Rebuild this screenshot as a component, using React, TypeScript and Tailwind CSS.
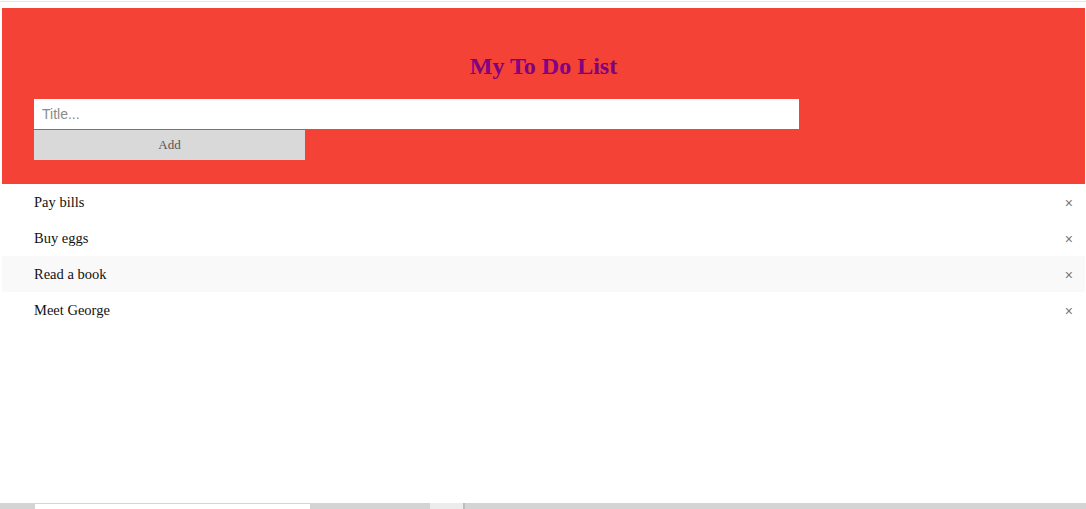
import { useState } from "react";

const initialItems = ["Pay bills", "Buy eggs", "Read a book", "Meet George"];

export default function App() {
  const [items, setItems] = useState(initialItems);
  const [title, setTitle] = useState("");

  const addItem = () => {
    if (!title.trim()) return;
    setItems([...items, title.trim()]);
    setTitle("");
  };

  return (
    <div className="h-[509px] flex flex-col bg-white overflow-hidden font-['Liberation_Serif',serif]">
      {/* Barra superior del navegador */}
      <div className="mt-px h-px bg-[#e4e6ea]" />

      {/* Cabecera */}
      <div className="mt-[6px] ml-[2px] mr-px h-[176px] bg-[#f44336] pt-[44px] px-[32px]">
        <h2 className="text-center text-[24px] leading-[28px] font-bold text-[#800080]">My To Do List</h2>
        <input
          value={title}
          onChange={(e) => setTitle(e.target.value)}
          placeholder="Title..."
          className="mt-[19px] block w-[765px] h-[30px] px-[8px] bg-white text-[14px] text-[#333] placeholder:text-[#8a8a8a] outline-none font-['Liberation_Sans',sans-serif]"
        />
        <button
          onClick={addItem}
          className="mt-px block w-[271px] h-[30px] bg-[#d9d9d9] text-[13px] text-[#555]"
        >
          Add
        </button>
      </div>

      {/* Lista */}
      <ul className="ml-[2px] mr-px">
        {items.map((item, i) => (
          <li
            key={i}
            className={`h-[36px] flex items-center justify-between pt-[2px] pl-[32px] pr-[12px] text-[14.5px] text-[#111] ${
              i === 2 ? "bg-[#f9f9f9]" : "bg-white"
            }`}
          >
            <span>{item}</span>
            <span
              onClick={() => setItems(items.filter((_, j) => j !== i))}
              className="text-[14px] text-[#777] cursor-pointer font-['Liberation_Sans',sans-serif]"
            >
              ×
            </span>
          </li>
        ))}
      </ul>

      <div className="flex-1" />

      {/* Barra de tareas recortada */}
      <div className="h-[6px] bg-[#d4d4d4] flex items-end">
        <div className="ml-[35px] w-[275px] h-[5px] bg-white" />
        <div className="ml-[120px] w-[33px] h-[6px] bg-[#ececec]" />
        <div className="w-[2px] h-[6px] bg-[#bdbdbd]" />
      </div>
    </div>
  );
}
